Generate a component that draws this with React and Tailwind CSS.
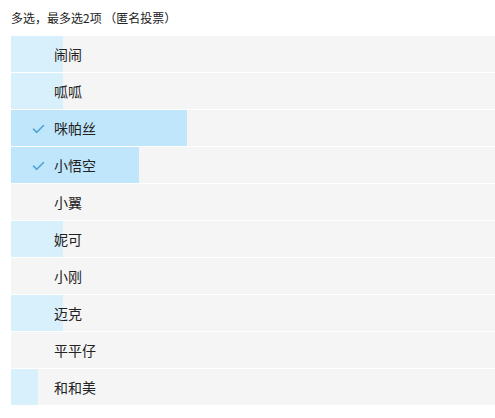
import React from "react";

const items = [
  { name: "闹闹", w: 52, sel: false },
  { name: "呱呱", w: 52, sel: false },
  { name: "咪帕丝", w: 176, sel: true },
  { name: "小悟空", w: 128, sel: true },
  { name: "小翼", w: 0, sel: false },
  { name: "妮可", w: 52, sel: false },
  { name: "小刚", w: 0, sel: false },
  { name: "迈克", w: 52, sel: false },
  { name: "平平仔", w: 0, sel: false },
  { name: "和和美", w: 27, sel: false },
];

export default function App() {
  return (
    <div
      className="w-[495px] h-[418px] bg-white text-[#333]"
      style={{ fontFamily: '"Microsoft YaHei", "Noto Sans CJK SC", sans-serif' }}
    >
      <div className="pl-[11px] pt-[9px] h-[36px] text-[12px] leading-[18px] text-[#222]">
        多选，最多选2项 （匿名投票）
      </div>
      <div className="ml-[11px] flex flex-col gap-px">
        {items.map((it) => (
          <div key={it.name} className="relative h-[36px] bg-[#f5f5f5] flex items-center">
            {it.w > 0 && (
              <div
                className={`absolute left-0 top-0 h-full ${it.sel ? "bg-[#c0e6fb]" : "bg-[#d8effc]"}`}
                style={{ width: it.w }}
              />
            )}
            <div className="relative flex items-center">
              <div className="w-[43px] flex justify-end pr-[9px]">
                {it.sel && (
                  <svg width="13" height="10" viewBox="0 0 13 10" className="mt-px">
                    <path d="M1.5 5.2 L4.8 8.3 L11.5 1.5" fill="none" stroke="#4ea3d6" strokeWidth="1.6" strokeLinecap="round" strokeLinejoin="round" />
                  </svg>
                )}
              </div>
              <span className="text-[14px] leading-[20px] text-[#222]">{it.name}</span>
            </div>
          </div>
        ))}
      </div>
    </div>
  );
}
